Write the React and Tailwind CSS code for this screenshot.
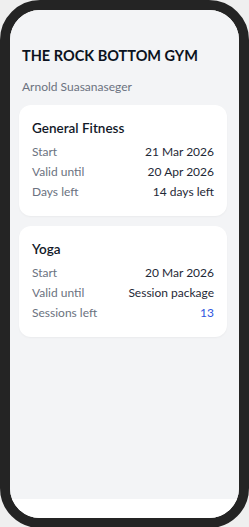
const memberships = [
  {
    name: "General Fitness",
    rows: [
      { label: "Start", value: "21 Mar 2026" },
      { label: "Valid until", value: "20 Apr 2026" },
      { label: "Days left", value: "14 days left" },
    ],
  },
  {
    name: "Yoga",
    rows: [
      { label: "Start", value: "20 Mar 2026" },
      { label: "Valid until", value: "Session package" },
      { label: "Sessions left", value: "13", accent: true },
    ],
  },
];

function MembershipCard({ membership }) {
  return (
    <div className="rounded-[12px] bg-white px-[13px] py-[14px] shadow-[0_1px_2px_rgba(0,0,0,0.04)]">
      <h2 className="text-[13.5px] font-semibold leading-[18px] text-[#111827]">
        {membership.name}
      </h2>
      <div className="mt-[5px] flex flex-col">
        {membership.rows.map((row) => (
          <div
            key={row.label}
            className="flex items-center justify-between text-[12px] leading-[20px]"
          >
            <span className="text-[#6b7280]">{row.label}</span>
            <span className={row.accent ? "text-[#2f55e0]" : "text-[#1f2937]"}>
              {row.value}
            </span>
          </div>
        ))}
      </div>
    </div>
  );
}

export default function App() {
  return (
    <div
      className="h-[527px] w-[249px] overflow-hidden bg-[#efefef]"
      style={{ fontFamily: 'Lato, "Noto Sans", sans-serif' }}
    >
      <div className="flex h-[528px] w-[249px] flex-col overflow-hidden rounded-[40px] border-[10px] border-[#242424] bg-white">
        <div className="flex flex-1 flex-col bg-[#f3f4f6] pl-[9px] pr-[12px] pt-[36px]">
          <div className="px-[3px]">
            <h1 className="text-[14.5px] font-bold leading-[20px] text-[#0b1220]">
              THE ROCK BOTTOM GYM
            </h1>
            <p className="mt-[13px] text-[12px] leading-[16px] text-[#6b7280]">
              Arnold Suasanaseger
            </p>
          </div>
          <div className="mt-[10px] flex flex-col gap-[10px]">
            {memberships.map((m) => (
              <MembershipCard key={m.name} membership={m} />
            ))}
          </div>
        </div>
        <div className="h-[19px] bg-white" />
      </div>
    </div>
  );
}
